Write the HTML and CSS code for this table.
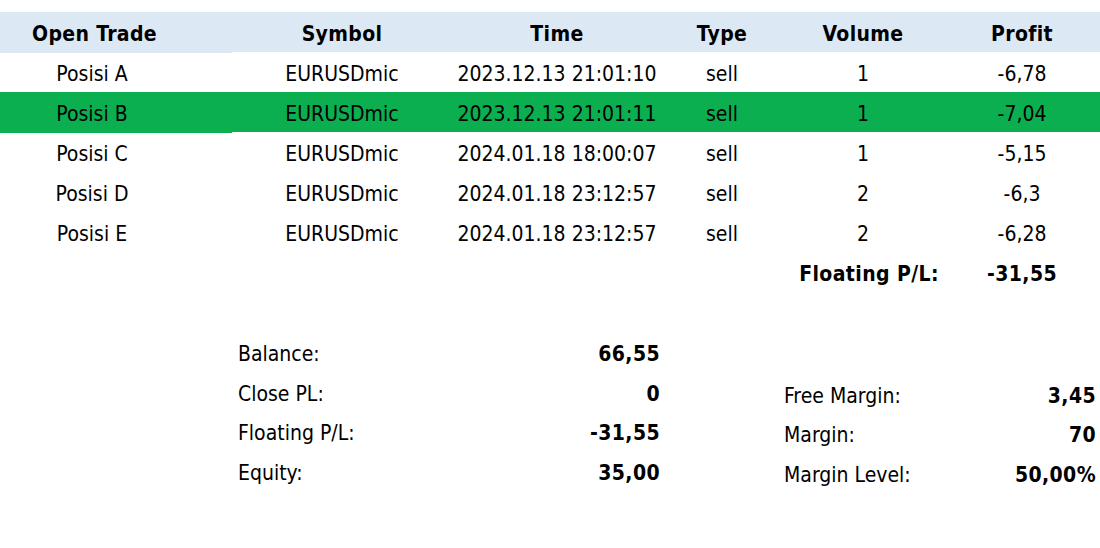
FILE: index.html
```html
<!DOCTYPE html>
<html>
<head>
<meta charset="utf-8">
<title>Open Trade</title>
<link rel="stylesheet" href="styles.css">
</head>
<body>
<div class="sheet">
  <div class="trades">
    <div class="row head">
      <div class="c c1 h1">Open Trade</div>
      <div class="c">Symbol</div>
      <div class="c">Time</div>
      <div class="c">Type</div>
      <div class="c">Volume</div>
      <div class="c">Profit</div>
    </div>
    <div class="row">
      <div class="c c1">Posisi A</div>
      <div class="c">EURUSDmic</div>
      <div class="c">2023.12.13 21:01:10</div>
      <div class="c">sell</div>
      <div class="c">1</div>
      <div class="c">-6,78</div>
    </div>
    <div class="row hl">
      <div class="c c1">Posisi B</div>
      <div class="c">EURUSDmic</div>
      <div class="c">2023.12.13 21:01:11</div>
      <div class="c">sell</div>
      <div class="c">1</div>
      <div class="c">-7,04</div>
    </div>
    <div class="row">
      <div class="c c1">Posisi C</div>
      <div class="c">EURUSDmic</div>
      <div class="c">2024.01.18 18:00:07</div>
      <div class="c">sell</div>
      <div class="c">1</div>
      <div class="c">-5,15</div>
    </div>
    <div class="row">
      <div class="c c1">Posisi D</div>
      <div class="c">EURUSDmic</div>
      <div class="c">2024.01.18 23:12:57</div>
      <div class="c">sell</div>
      <div class="c">2</div>
      <div class="c">-6,3</div>
    </div>
    <div class="row">
      <div class="c c1">Posisi E</div>
      <div class="c">EURUSDmic</div>
      <div class="c">2024.01.18 23:12:57</div>
      <div class="c">sell</div>
      <div class="c">2</div>
      <div class="c">-6,28</div>
    </div>
    <div class="row total">
      <div class="c c1"></div>
      <div class="c"></div>
      <div class="c"></div>
      <div class="c"></div>
      <div class="c b fl">Floating P/L:</div>
      <div class="c b">-31,55</div>
    </div>
  </div>

  <div class="summary">
    <div class="block left">
      <div class="line"><span>Balance:</span><span class="b">66,55</span></div>
      <div class="line"><span>Close PL:</span><span class="b">0</span></div>
      <div class="line"><span>Floating P/L:</span><span class="b">-31,55</span></div>
      <div class="line"><span>Equity:</span><span class="b">35,00</span></div>
    </div>
    <div class="block right">
      <div class="line"></div>
      <div class="line"><span>Free Margin:</span><span class="b">3,45</span></div>
      <div class="line"><span>Margin:</span><span class="b">70</span></div>
      <div class="line"><span>Margin Level:</span><span class="b">50,00%</span></div>
    </div>
  </div>
</div>
</body>
</html>
```

FILE: styles.css
```css
html, body {
  margin: 0;
  padding: 0;
  background: #ffffff;
}

body {
  font-family: "DejaVu Sans Condensed", "DejaVu Sans", sans-serif;
  font-stretch: condensed;
  font-size: 21px;
  color: #000000;
}

.sheet {
  width: 1100px;
  height: 548px;
  padding-top: 12px;
  box-sizing: border-box;
}

.row {
  display: grid;
  grid-template-columns: 232px 220px 210px 120px 162px 156px;
  height: 40px;
}

.head {
  background: #dde8f5;
  font-weight: bold;
  letter-spacing: 0.35px;
}

.head .c1 {
  box-shadow: 0 1px 0 #dde8f5;
}

.hl {
  background: #0caf50;
}

.hl .c1 {
  box-shadow: 0 1px 0 #0caf50;
}

.c {
  display: flex;
  justify-content: center;
  white-space: nowrap;
  padding-top: 5px;
  line-height: 35px;
  box-sizing: border-box;
}

.c1 {
  padding-right: 48px;
}

.h1 {
  padding-right: 43px;
}

.fl {
  padding-left: 12px;
}

.b {
  font-weight: bold;
  letter-spacing: 0.4px;
}

.summary {
  display: flex;
  gap: 124px;
  padding-left: 238px;
  margin-top: 40px;
}

.block {
  display: flex;
  flex-direction: column;
}

.left {
  width: 422px;
}

.right {
  width: 312px;
  margin-top: 2px;
}

.line {
  display: flex;
  justify-content: space-between;
  height: 39.5px;
  padding-top: 5px;
  line-height: 34.5px;
  box-sizing: border-box;
  white-space: nowrap;
}
```
